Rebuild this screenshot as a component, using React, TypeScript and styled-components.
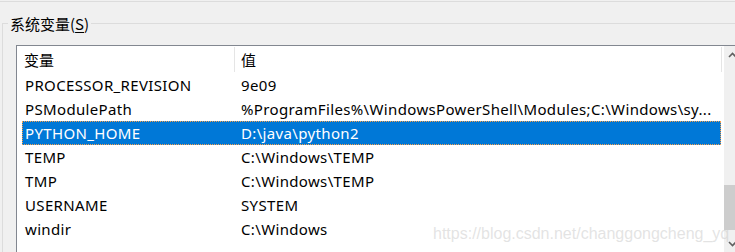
import React from "react";
import styled, { createGlobalStyle } from "styled-components";

const Global = createGlobalStyle`
  html, body { margin: 0; padding: 0; background: #f0f0f0; }
  body { font-family: "Noto Sans", "Noto Sans CJK SC", sans-serif; }
`;

const Screen = styled.div`
  width: 735px;
  height: 252px;
  overflow: hidden;
  background: #f0f0f0;
  position: relative;
`;

const TopRule = styled.div`
  margin-top: 1px;
  height: 0;
  border-top: 1px solid #dcdcdc;
`;

const GroupBox = styled.div`
  position: relative;
  margin: 21px 0 0 2px;
  border-top: 1px solid #dcdcdc;
  border-left: 1px solid #dcdcdc;
  padding: 21px 0 0 13px;
`;

const Legend = styled.div`
  position: absolute;
  top: -9px;
  left: 5px;
  padding: 0 2px;
  background: #f0f0f0;
  font-family: "Noto Sans CJK SC", sans-serif;
  font-size: 15px;
  line-height: 17px;
  color: #000;
  u { text-decoration: underline; text-underline-offset: 2px; }
`;

const ListView = styled.div`
  width: 740px;
  height: 206px;
  display: flex;
  background: #fff;
  border-top: 1px solid #828790;
  border-left: 1px solid #828790;
`;

const Content = styled.div`
  width: 706px;
  flex: none;
  display: flex;
  flex-direction: column;
`;

const Header = styled.div`
  height: 27px;
  display: grid;
  grid-template-columns: 218px 487px;
`;

const HeaderCell = styled.div<{ $pad: number }>`
  margin: 1px 0 1px;
  padding-left: ${(p) => p.$pad}px;
  border-right: 1px solid #e5e5e5;
  font-family: "Noto Sans CJK SC", sans-serif;
  font-size: 15px;
  line-height: 25px;
  color: #000;
`;

const Row = styled.div<{ $selected?: boolean }>`
  margin-left: 5px;
  width: 699px;
  height: 24px;
  box-sizing: border-box;
  display: grid;
  grid-template-columns: 213px 486px;
  align-items: center;
  background: ${(p) => (p.$selected ? "#0078d7" : "transparent")};
  color: ${(p) => (p.$selected ? "#fff" : "#000")};
  border: 1px ${(p) => (p.$selected ? "dotted #f6a04c" : "solid transparent")};
`;

const Cell = styled.div<{ $pad: number }>`
  padding-left: ${(p) => p.$pad}px;
  font-family: "Noto Sans", "Noto Sans CJK SC", sans-serif;
  font-size: 15px;
  letter-spacing: 0.35px;
  line-height: 20px;
  white-space: nowrap;
  overflow: hidden;
`;

const ScrollBar = styled.div`
  width: 17px;
  margin-left: 1px;
  flex: none;
  background: #f0f0f0;
  display: flex;
  flex-direction: column;
`;

const ArrowButton = styled.div`
  height: 17px;
  display: flex;
  align-items: center;
  justify-content: center;
`;

const Track = styled.div`
  flex: 1;
  position: relative;
`;

const Thumb = styled.div`
  position: absolute;
  left: 0;
  right: 0;
  background: #cdcdcd;
`;

const Watermark = styled.div`
  position: absolute;
  left: 433px;
  top: 224px;
  font-family: "Liberation Sans", Arial, sans-serif;
  font-size: 16px;
  line-height: 20px;
  color: rgba(200, 200, 200, 0.5);
  white-space: nowrap;
  pointer-events: none;
`;

const rows: [string, string][] = [
  ["PROCESSOR_REVISION", "9e09"],
  ["PSModulePath", "%ProgramFiles%\\WindowsPowerShell\\Modules;C:\\Windows\\sy..."],
  ["PYTHON_HOME", "D:\\java\\python2"],
  ["TEMP", "C:\\Windows\\TEMP"],
  ["TMP", "C:\\Windows\\TEMP"],
  ["USERNAME", "SYSTEM"],
  ["windir", "C:\\Windows"],
];

const Chevron = ({ up }: { up?: boolean }) => (
  <svg width="9" height="6" viewBox="0 0 9 6">
    <path
      d={up ? "M1 5 L4.5 1.5 L8 5" : "M1 1 L4.5 4.5 L8 1"}
      fill="none"
      stroke="#606060"
      strokeWidth="1.6"
    />
  </svg>
);

export default function App() {
  return (
    <Screen>
      <Global />
      <TopRule />
      <GroupBox>
        <Legend>
          系统变量(<u>S</u>)
        </Legend>
        <ListView>
          <Content>
            <Header>
              <HeaderCell $pad={7}>变量</HeaderCell>
              <HeaderCell $pad={6}>值</HeaderCell>
            </Header>
            {rows.map(([name, value]) => (
              <Row key={name} $selected={name === "PYTHON_HOME"}>
                <Cell $pad={2}>{name}</Cell>
                <Cell $pad={5}>{value}</Cell>
              </Row>
            ))}
          </Content>
          <ScrollBar>
            <ArrowButton>
              <Chevron up />
            </ArrowButton>
            <Track>
              <Thumb style={{ top: 122, height: 45 }} />
            </Track>
            <ArrowButton>
              <Chevron />
            </ArrowButton>
          </ScrollBar>
        </ListView>
      </GroupBox>
      <Watermark>https://blog.csdn.net/changgongcheng_yq</Watermark>
    </Screen>
  );
}
